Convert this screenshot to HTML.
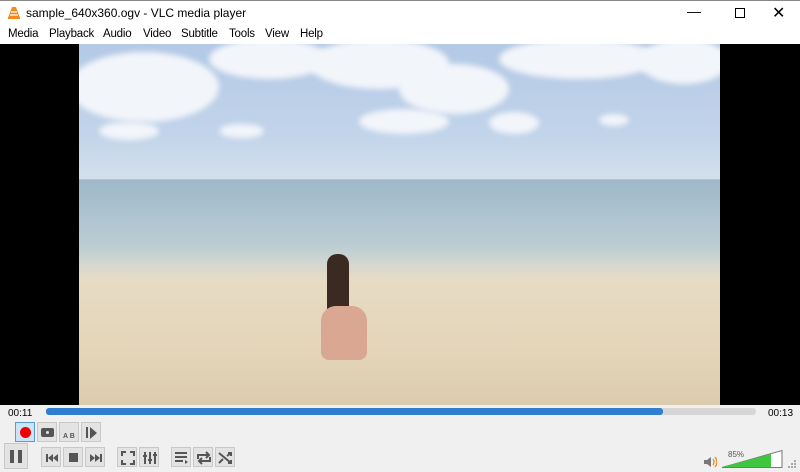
<!DOCTYPE html>
<html><head><style>
*{margin:0;padding:0;box-sizing:border-box}
body{width:800px;height:472px;overflow:hidden;background:#f0f0f0;font-family:"Liberation Sans",sans-serif;font-size:12px;color:#000;position:relative}
.title{position:absolute;left:0;top:0;width:800px;height:26px;background:#fff;border-top:1px solid #888}
.title span{position:absolute;left:26px;top:5px;font-size:12px}
.menu{position:absolute;top:26px;left:0;width:800px;height:18px;background:#fff}
.menu span{position:absolute;top:2px;font-size:11.5px;letter-spacing:-0.2px}
.video{position:absolute;top:44px;left:0;width:800px;height:361px;background:#000}
.img{position:absolute;left:79px;top:0;width:641px;height:361px;overflow:hidden;background:linear-gradient(#b3c9e6 0%,#c2d4ea 25%,#d3dfec 37.4%,#9fb8c9 37.6%,#a9c1ce 45%,#bccdd3 56%,#d4d7d0 61%,#e6dbc4 65%,#e4d5b9 85%,#dccbad 100%)}
.cloud{position:absolute;background:#f2f5fa;border-radius:50%;filter:blur(3px)}
.btn{position:absolute;width:20px;height:20px;background:#e3e3e3;border:1px solid #c8c8c8}
.ic{position:absolute;left:0;top:0}
</style></head><body>
<div class="title">
<svg style="position:absolute;left:7px;top:5px" width="14" height="14" viewBox="0 0 14 14"><path d="M5 1h4l4 11H1z" fill="#f08a1c"/><path d="M4 6h6M3 9h8" stroke="#fff" stroke-width="1.2"/><rect x="1" y="11" width="12" height="2" fill="#f08a1c"/></svg>
<span>sample_640x360.ogv - VLC media player</span>
<span style="left:687px;top:2px;font-size:14px">—</span>
<div style="position:absolute;left:735px;top:7px;width:10px;height:10px;border:1px solid #000"></div>
<span style="left:772px;top:2px;font-size:16px">✕</span>
</div>
<div class="menu">
<span style="left:8px">Media</span><span style="left:49px">Playback</span><span style="left:103px">Audio</span><span style="left:143px">Video</span><span style="left:181px">Subtitle</span><span style="left:229px">Tools</span><span style="left:265px">View</span><span style="left:300px">Help</span>
</div>
<div class="video"><div class="img">
<div class="cloud" style="left:-10px;top:8px;width:150px;height:70px"></div>
<div class="cloud" style="left:130px;top:-5px;width:120px;height:40px"></div>
<div class="cloud" style="left:230px;top:-5px;width:140px;height:50px"></div>
<div class="cloud" style="left:320px;top:20px;width:110px;height:50px"></div>
<div class="cloud" style="left:420px;top:-5px;width:160px;height:40px"></div>
<div class="cloud" style="left:560px;top:-5px;width:90px;height:45px"></div>
<div class="cloud" style="left:20px;top:78px;width:60px;height:18px"></div>
<div class="cloud" style="left:140px;top:80px;width:45px;height:14px"></div>
<div class="cloud" style="left:280px;top:65px;width:90px;height:25px"></div>
<div class="cloud" style="left:410px;top:68px;width:50px;height:22px"></div>
<div class="cloud" style="left:520px;top:70px;width:30px;height:12px"></div>
<div style="position:absolute;left:248px;top:210px;width:22px;height:60px;background:#3a2a22;border-radius:10px 10px 4px 4px"></div>
<div style="position:absolute;left:242px;top:262px;width:46px;height:54px;background:#d9a792;border-radius:15px 15px 8px 8px"></div>
</div></div>
<span style="position:absolute;left:8px;top:408px;font-size:10px">00:11</span>
<div style="position:absolute;left:46px;top:408px;width:710px;height:7px;background:#d6d6d6;border-radius:3px"></div>
<div style="position:absolute;left:46px;top:408px;width:617px;height:7px;background:#2f7ed0;border-radius:3px"></div>
<span style="position:absolute;left:768px;top:408px;font-size:10px">00:13</span>
<div class="btn" style="left:15px;top:422px;background:#cce4f7;border-color:#5b9bd5"><div style="position:absolute;left:4px;top:4px;width:11px;height:11px;background:#e00;border-radius:50%"></div></div>
<div class="btn" style="left:37px;top:422px"><div style="position:absolute;left:3px;top:5px;width:13px;height:9px;background:#555;border-radius:2px"></div><div style="position:absolute;left:6px;top:6px;width:7px;height:7px;background:#e3e3e3;border-radius:50%;border:2px solid #555"></div></div>
<div class="btn" style="left:59px;top:422px;font-size:7px;font-weight:bold;color:#555;padding:10px 0 0 3px">A B</div>
<div class="btn" style="left:81px;top:422px"><div style="position:absolute;left:4px;top:4px;width:2px;height:11px;background:#555"></div><svg class="ic" width="20" height="20"><path d="M8 4l7 6-7 6z" fill="#555"/></svg></div>
<div class="btn" style="left:4px;top:443px;width:24px;height:26px"><div style="position:absolute;left:5px;top:6px;width:4px;height:13px;background:#555"></div><div style="position:absolute;left:13px;top:6px;width:4px;height:13px;background:#555"></div></div>
<div class="btn" style="left:41px;top:447px"><svg class="ic" width="20" height="20"><path d="M4 6h2v8H4zM11 6v8l-5-4zM16 6v8l-5-4z" fill="#555"/></svg></div>
<div class="btn" style="left:63px;top:447px"><div style="position:absolute;left:5px;top:5px;width:9px;height:9px;background:#555"></div></div>
<div class="btn" style="left:85px;top:447px"><svg class="ic" width="20" height="20"><path d="M14 6h2v8h-2zM4 6v8l5-4zM9 6v8l5-4z" fill="#555"/></svg></div>
<div class="btn" style="left:117px;top:447px"><svg class="ic" width="20" height="20" fill="none" stroke="#555" stroke-width="2"><path d="M4 8V4h4M12 4h4v4M16 12v4h-4M8 16H4v-4"/></svg></div>
<div class="btn" style="left:139px;top:447px"><svg class="ic" width="20" height="20" stroke="#555" stroke-width="2"><path d="M5 4v12M10 4v12M15 4v12"/><path d="M3 8h4M8 12h4M13 7h4"/></svg></div>
<div class="btn" style="left:171px;top:447px"><svg class="ic" width="20" height="20" stroke="#555" stroke-width="2"><path d="M3 5h12M3 9h12M3 13h8"/><path d="M13 12v4l3-2z" fill="#555" stroke="none"/></svg></div>
<div class="btn" style="left:193px;top:447px"><svg class="ic" width="20" height="20" fill="none" stroke="#555" stroke-width="2"><path d="M4 11V7h11M12 4l3 3-3 3M16 9v4H5M8 16l-3-3 3-3"/></svg></div>
<div class="btn" style="left:215px;top:447px"><svg class="ic" width="20" height="20" fill="none" stroke="#555" stroke-width="2"><path d="M3 5l12 10M3 15l4-4M11 8l4-3M12 5h3v3M12 15h3v-3"/></svg></div>
<svg style="position:absolute;left:703px;top:456px" width="14" height="12"><path d="M1 4h3l4-3v10L4 8H1z" fill="#777"/><path d="M10 3q2 3 0 6M12 1q4 5 0 10" stroke="#f08a1c" fill="none" stroke-width="1.3"/></svg>
<span style="position:absolute;left:728px;top:450px;font-size:8px;color:#555">85%</span>
<svg style="position:absolute;left:720px;top:449px" width="70" height="20"><path d="M2 18.5L62 1.5V18.5z" fill="#fff" stroke="#777"/><path d="M2.5 18L51 5V18z" fill="#3fc63f"/></svg>
<svg style="position:absolute;left:788px;top:460px" width="10" height="10" fill="#aaa"><rect x="6" y="0" width="2" height="2"/><rect x="3" y="3" width="2" height="2"/><rect x="6" y="3" width="2" height="2"/><rect x="0" y="6" width="2" height="2"/><rect x="3" y="6" width="2" height="2"/><rect x="6" y="6" width="2" height="2"/></svg>
</body></html>
